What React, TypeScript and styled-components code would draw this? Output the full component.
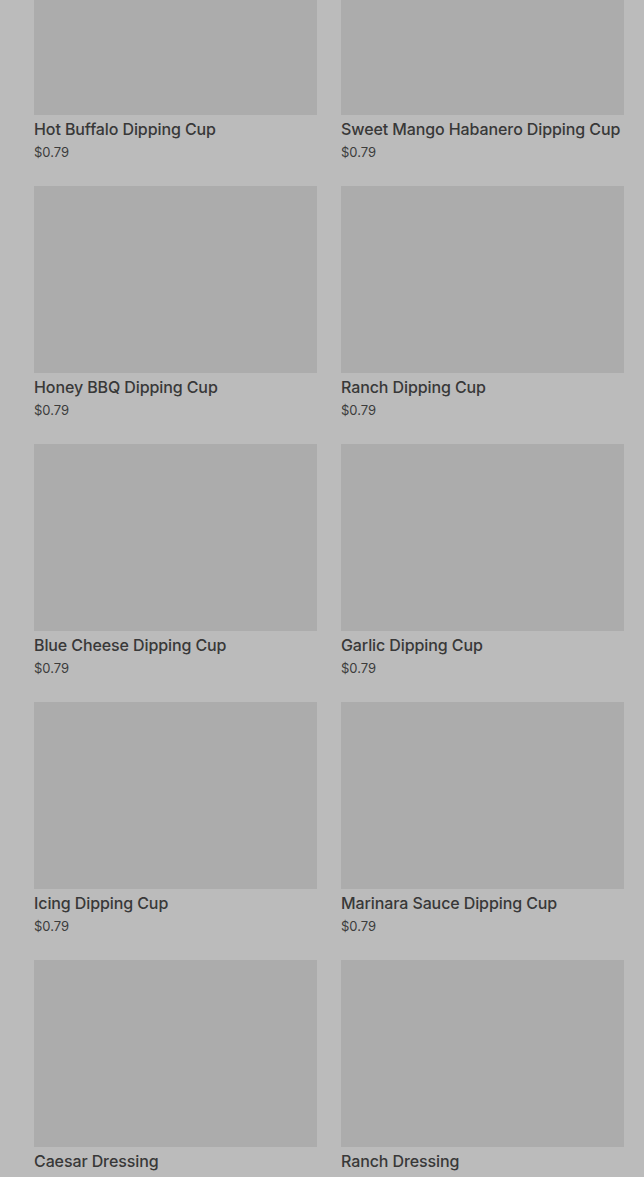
import React from 'react'
import styled, { createGlobalStyle } from 'styled-components'

type Product = {
  title: string;
  price: string;
}

const products: Product[] = [
  { title: 'Hot Buffalo Dipping Cup', price: '$0.79' },
  { title: 'Sweet Mango Habanero Dipping Cup', price: '$0.79' },
  { title: 'Honey BBQ Dipping Cup', price: '$0.79' },
  { title: 'Ranch Dipping Cup', price: '$0.79' },
  { title: 'Blue Cheese Dipping Cup', price: '$0.79' },
  { title: 'Garlic Dipping Cup', price: '$0.79' },
  { title: 'Icing Dipping Cup', price: '$0.79' },
  { title: 'Marinara Sauce Dipping Cup', price: '$0.79' },
  { title: 'Caesar Dressing', price: '$0.79' },
  { title: 'Ranch Dressing', price: '$0.79' },
]

const GlobalStyle = createGlobalStyle`
  html, body {
    margin: 0;
    padding: 0;
    background: #bbbbbb;
    height: 100%;
    overflow: hidden;
  }
  body {
    font-family: Inter, "Noto Sans", sans-serif;
  }
`

const ProductCard = ({ title, price }: Product) => {
  return (
    <Card>
      <Thumb />
      <Title>{title}</Title>
      <Price>{price}</Price>
    </Card>
  )
}

const App = () => {
  return (
    <>
      <GlobalStyle />
      <Page>
        <Grid>
          {products.map((p) => (
            <ProductCard key={p.title} {...p} />
          ))}
        </Grid>
      </Page>
    </>
  )
}

const Page = styled.div`
  width: 644px;
  height: 1177px;
  overflow: hidden;
  background: #bbbbbb;
`

// list is scrolled: first row's picture is partly above the fold
const Grid = styled.div`
  display: grid;
  grid-template-columns: 283px 283px;
  column-gap: 24px;
  row-gap: 26px;
  padding: 0 20px 0 34px;
  margin-top: -72px;
`

const Card = styled.div`
  display: flex;
  flex-direction: column;
`

const Thumb = styled.div`
  width: 100%;
  height: 187px;
  background-color: #acacac;
`

const Title = styled.div`
  margin-top: 4px;
  font-size: 16px;
  line-height: 20px;
  font-weight: 500;
  letter-spacing: -0.1px;
  color: #383838;
  white-space: nowrap;
`

const Price = styled.div`
  margin-top: 5px;
  font-size: 13px;
  line-height: 16px;
  font-weight: 400;
  color: #3c3c3c;
`

export default App
